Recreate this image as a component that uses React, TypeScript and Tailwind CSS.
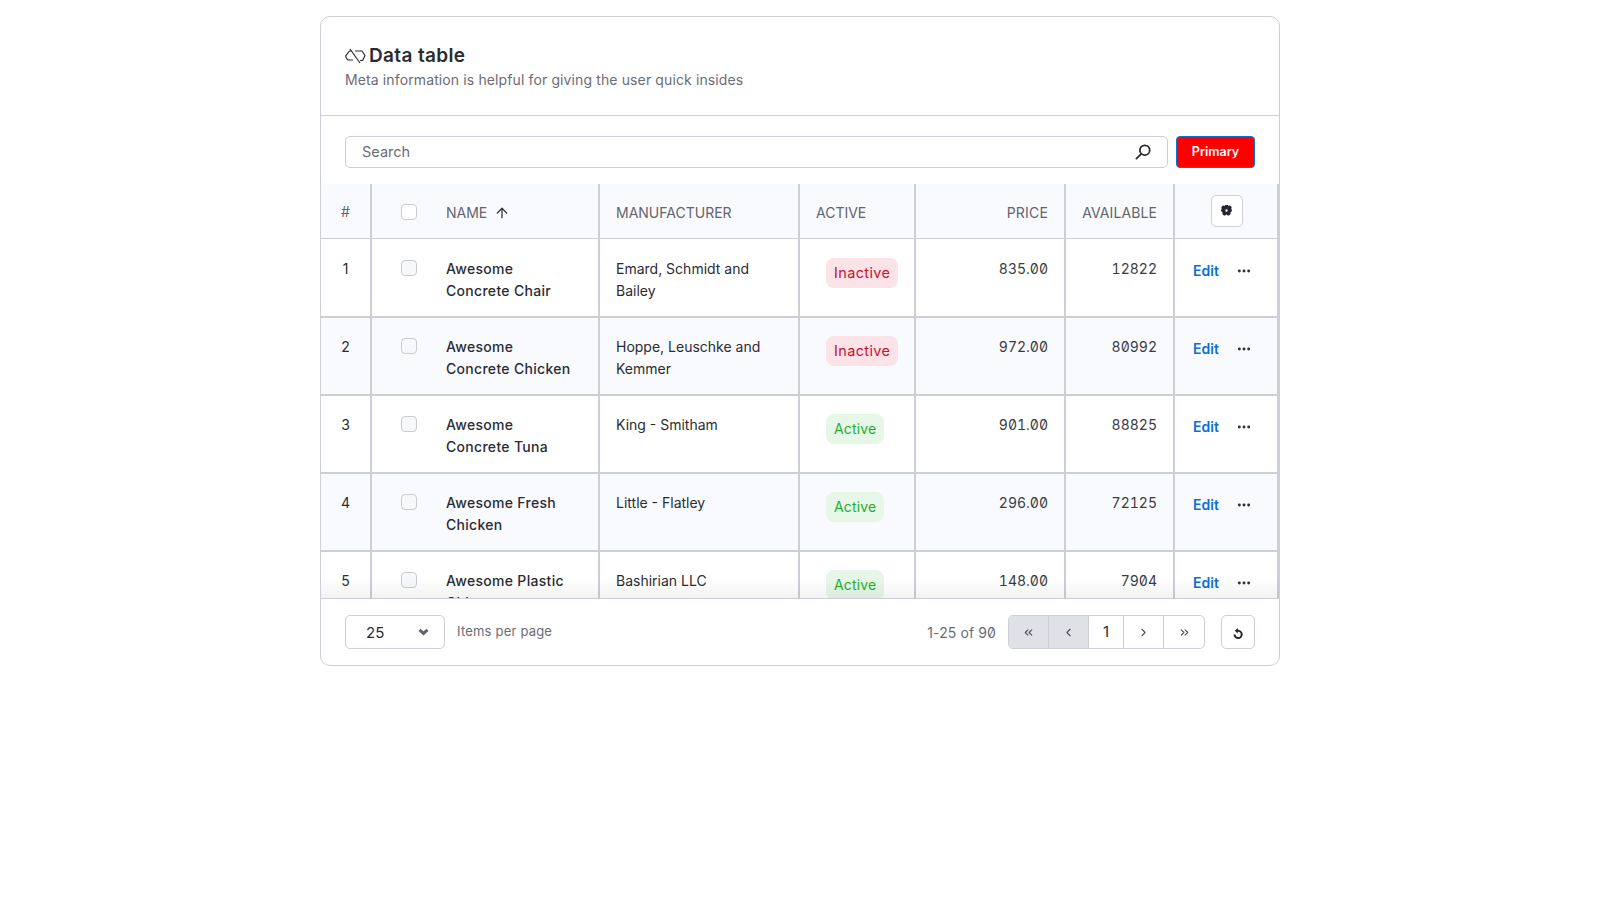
import { ArrowUp, ChevronLeft, ChevronRight, ChevronsLeft, ChevronsRight, MoreHorizontal } from "lucide-react";

type Product = {
  id: number;
  name: string;
  manufacturer: string;
  active: boolean;
  price: string;
  available: string;
};

const products: Product[] = [
  { id: 1, name: "Awesome Concrete Chair", manufacturer: "Emard, Schmidt and Bailey", active: false, price: "835.00", available: "12822" },
  { id: 2, name: "Awesome Concrete Chicken", manufacturer: "Hoppe, Leuschke and Kemmer", active: false, price: "972.00", available: "80992" },
  { id: 3, name: "Awesome Concrete Tuna", manufacturer: "King - Smitham", active: true, price: "901.00", available: "88825" },
  { id: 4, name: "Awesome Fresh Chicken", manufacturer: "Little - Flatley", active: true, price: "296.00", available: "72125" },
  { id: 5, name: "Awesome Plastic Chips", manufacturer: "Bashirian LLC", active: true, price: "148.00", available: "7904" },
];

const numeric = "tabular-nums slashed-zero text-[#3a3b43]";

function Checkbox({ tinted }: { tinted?: boolean }) {
  return (
    <span
      className={`block h-4 w-4 rounded-[4px] border border-[#c9cad3] ${tinted ? "bg-[#f7f8fc]" : "bg-white"}`}
    />
  );
}

function LogoIcon() {
  return (
    <svg width="21" height="16" viewBox="0 0 21 16" fill="none" stroke="#2b2c33" strokeWidth="1.2" strokeLinejoin="round">
      <path d="M6.5 3H4.4L0.9 7.6Q0.5 8.4 1 9.2L2 11Q2.5 12 3.4 12H8" />
      <path d="M5 1l10 14" />
      <path d="M10 3h7l3 4.5-2.4 5H15" />
    </svg>
  );
}

function SearchIcon() {
  return (
    <svg width="18" height="18" viewBox="0 0 18 18" fill="none" stroke="#2b2c33" strokeWidth="1.8">
      <circle cx="10.8" cy="7.2" r="4.9" />
      <path d="M7.2 10.8L2.4 15.6" strokeLinecap="round" />
    </svg>
  );
}

function GearIcon() {
  return (
    <svg width="11" height="11" viewBox="0 0 11 11" fill="#26272e">
      <path
        fillRule="evenodd"
        d="M3.6.9a2 2 0 013.8 0 2 2 0 012.7 2.9 2 2 0 01-.8 3.6 2 2 0 01-3.8 1.9 2 2 0 01-3.8-1.9 2 2 0 01-.8-3.6A2 2 0 013.6.9zM5.5 4.3a1.2 1.2 0 100 2.4 1.2 1.2 0 000-2.4z"
      />
    </svg>
  );
}

function ReloadIcon() {
  return (
    <svg width="12" height="13" viewBox="0 0 12 13" fill="none" stroke="#26272e" strokeWidth="2">
      <path d="M4 3.8H6.2a3.6 3.6 0 11-3.7 3.7" />
      <path d="M5.8 1L2.8 3.8l3 2.6z" fill="#26272e" stroke="none" />
    </svg>
  );
}

function CaretIcon() {
  return (
    <svg width="11" height="8" viewBox="0 0 11 8" fill="none" stroke="#63646d" strokeWidth="3">
      <path d="M1.5 1.8L5.5 5.4l4-3.6" />
    </svg>
  );
}

const th = "border-r-2 border-[#cdced6] bg-[#f9fafe] px-4 pt-[2px] font-normal";
const td = "border-r-2 border-[#cdced6] px-4 align-top";

export default function App() {
  return (
    <div className="min-h-screen bg-white pt-4 font-['Inter',sans-serif] text-[14px] text-[#2b2c33]">
      <div className="mx-auto flex h-[650px] w-[960px] flex-col overflow-hidden rounded-[10px] border border-[#cdced6]">
        <div className="flex h-[99px] shrink-0 flex-col border-b border-[#cdced6] px-6 pt-[27px]">
          <div className="flex items-center gap-[3px] text-[19px] leading-[24px] font-semibold tracking-[0.35px]">
            <LogoIcon />
            <span>Data table</span>
          </div>
          <p className="mt-[1px] text-[14px] leading-[22px] tracking-[0.12px] text-[#6b6c75]">
            Meta information is helpful for giving the user quick insides
          </p>
        </div>

        <div className="flex h-[68px] shrink-0 items-start gap-2 px-6 pt-5">
          <div className="flex h-8 flex-1 items-center justify-between rounded-[5px] border border-[#cdced6] pr-[15px] pl-4 text-[#6b6c75]">
            <span className="text-[14.5px]">Search</span>
            <SearchIcon />
          </div>
          <button className="h-8 w-[79px] rounded-[4px] border border-[#0b6fd6] bg-[#ff0000] text-[12.5px] font-semibold text-white">
            Primary
          </button>
        </div>

        <div className="relative min-h-0 flex-1 overflow-hidden">
          <table className="w-full table-fixed border-collapse">
            <colgroup>
              <col className="w-[50px]" />
              <col className="w-[228px]" />
              <col className="w-[200px]" />
              <col className="w-[116px]" />
              <col className="w-[150px]" />
              <col className="w-[109px]" />
              <col />
            </colgroup>
            <thead>
              <tr className="h-[54px] border-b border-[#cdced6] text-[#63646d]">
                <th className={`${th} !px-0 text-center`}>#</th>
                <th className={`${th} !pr-2 !pl-[29px] text-left`}>
                  <div className="flex items-center gap-[29px]">
                    <Checkbox />
                    <span className="flex items-center gap-[7px] pt-[2px]">
                      NAME <ArrowUp size={16} strokeWidth={2} color="#3a3b43" />
                    </span>
                  </div>
                </th>
                <th className={`${th} !pt-1 text-left`}>MANUFACTURER</th>
                <th className={`${th} !pt-1 text-left`}>ACTIVE</th>
                <th className={`${th} !pt-1 text-right tracking-[0.2px]`}>PRICE</th>
                <th className={`${th} !pt-1 text-right tracking-[0.1px]`}>AVAILABLE</th>
                <th className={`${th} !pr-0 !pl-[1px]`}>
                  <button className="mx-auto mb-[2px] flex h-8 w-8 items-center justify-center rounded-[5px] border border-[#cdced6] bg-white">
                    <GearIcon />
                  </button>
                </th>
              </tr>
            </thead>
            <tbody>
              {products.map((p, i) => (
                <tr
                  key={p.id}
                  className={`h-[78px] border-b-2 border-[#cdced6] leading-[22px] first:h-[79px] first:[&>td]:pt-px ${i % 2 === 1 ? "bg-[#f9fafe]" : "bg-white"}`}
                >
                  <td className={`${td} !px-0 text-center`}>
                    <div className="mt-[18px]">{p.id}</div>
                  </td>
                  <td className={`${td} !pr-2 !pl-[29px]`}>
                    <div className="mt-[18px] flex gap-[29px]">
                      <span className="pt-[2px]"><Checkbox tinted /></span>
                      <span className="w-[130px] font-medium tracking-[0.3px]">{p.name}</span>
                    </div>
                  </td>
                  <td className={td}>
                    <div className="mt-[18px]">{p.manufacturer}</div>
                  </td>
                  <td className={`${td} !pl-[26px]`}>
                    <div className="mt-[18px]">
                      <span
                        className={`inline-block rounded-[8px] px-2 py-1 ${p.active ? "bg-[#e7f7e7] text-[14px] tracking-[0.15px] text-[#1fae2e]" : "bg-[#fbe3e8] text-[14.5px] tracking-[0.35px] text-[#c9102f]"}`}
                      >
                        {p.active ? "Active" : "Inactive"}
                      </span>
                    </div>
                  </td>
                  <td className={`${td} text-right ${numeric}`}>
                    <div className="mt-[18px]">{p.price}</div>
                  </td>
                  <td className={`${td} text-right ${numeric}`}>
                    <div className="mt-[18px]">{p.available}</div>
                  </td>
                  <td className={`${td} !pl-[18px]`}>
                    <div className="mt-5 flex items-center gap-[17px]">
                      <a className="font-semibold text-[#0b6fd6]">Edit</a>
                      <MoreHorizontal size={16} strokeWidth={2.4} />
                    </div>
                  </td>
                </tr>
              ))}
            </tbody>
          </table>
          <div className="absolute inset-x-0 bottom-0 h-5 bg-gradient-to-b from-transparent to-black/5" />
        </div>

        <div className="flex h-[67px] shrink-0 items-center justify-between border-t border-[#cdced6] px-6">
          <div className="flex items-center gap-3">
            <div className="flex h-[34px] w-[100px] items-center justify-between rounded-[5px] border border-[#cdced6] pr-[15px] pl-[20px] text-[15px]">
              <span className="pt-[2px]">25</span>
              <CaretIcon />
            </div>
            <span className="text-[13px] tracking-[0.2px] text-[#6b6c75]">Items per page</span>
          </div>
          <div className="flex items-center">
            <span className="mr-3 tracking-[0.1px] slashed-zero text-[#6b6c75]">1-25 of 90</span>
            <div className="flex h-[34px] overflow-hidden rounded-[5px] border border-[#cdced6] text-[#4d4e57]">
              <span className="flex w-10 items-center justify-center border-r border-[#cdced6] bg-[#e0e1e6]">
                <ChevronsLeft size={13} />
              </span>
              <span className="flex w-10 items-center justify-center border-r border-[#cdced6] bg-[#e0e1e6]">
                <ChevronLeft size={13} />
              </span>
              <span className="flex w-[35px] items-center justify-center border-r border-[#cdced6] text-[15px] text-[#2b2c33]">
                1
              </span>
              <span className="flex w-10 items-center justify-center border-r border-[#cdced6]">
                <ChevronRight size={13} />
              </span>
              <span className="flex w-10 items-center justify-center">
                <ChevronsRight size={13} />
              </span>
            </div>
            <button className="ml-4 flex h-[34px] w-[34px] items-center justify-center rounded-[5px] border border-[#cdced6] pt-[2px]">
              <ReloadIcon />
            </button>
          </div>
        </div>
      </div>
    </div>
  );
}
